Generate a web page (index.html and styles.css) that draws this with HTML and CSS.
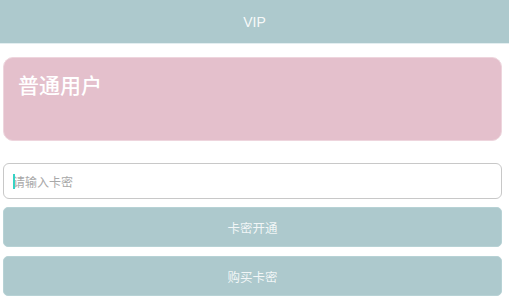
FILE: index.html
```html
<!DOCTYPE html>
<html lang="zh-CN">
<head>
<meta charset="utf-8">
<title>VIP</title>
<link rel="stylesheet" href="styles.css">
</head>
<body>
<header class="topbar">VIP</header>
<main class="content">
  <section class="user-card">
    <h1 class="user-level">普通用户</h1>
  </section>
  <div class="field">
    <span class="caret"></span>
    <input class="code-input" type="text" placeholder="请输入卡密">
  </div>
  <button class="action-btn" type="button">卡密开通</button>
  <button class="action-btn" type="button">购买卡密</button>
</main>
</body>
</html>
```
FILE: styles.css
```css
* { box-sizing: border-box; }

html, body {
  margin: 0;
  padding: 0;
  background: #ffffff;
  font-family: "Liberation Sans", "Noto Sans", "Noto Sans CJK SC", sans-serif;
}

.topbar {
  height: 44px;
  background: #adc9cd;
  border-bottom: 1px solid #e3eef0;
  color: rgba(255, 255, 255, 0.9);
  font-size: 14px;
  display: flex;
  align-items: center;
  justify-content: center;
}

.content {
  margin: 0 7px 0 3px;
  padding-top: 13px;
  display: flex;
  flex-direction: column;
}

.user-card {
  height: 84px;
  background: #e4c0cc;
  border: 1px solid #eed5dd;
  border-radius: 10px;
  padding: 12px 14px;
}

.user-level {
  margin: 0;
  font-family: "Noto Sans CJK SC", sans-serif;
  font-size: 21px;
  font-weight: 500;
  line-height: 28px;
  color: #ffffff;
}

.field {
  position: relative;
  margin-top: 22px;
  height: 36px;
  border: 1px solid #c8c8c8;
  border-radius: 6px;
  background: #ffffff;
}

.code-input {
  width: 100%;
  height: 100%;
  border: 0;
  outline: none;
  background: transparent;
  padding: 0 9px;
  font-family: "Noto Sans CJK SC", sans-serif;
  font-size: 12px;
  color: #333;
}

.code-input::placeholder {
  color: #a8a8a8;
}

.caret {
  position: absolute;
  left: 9px;
  top: 10px;
  width: 2px;
  height: 15px;
  background: #36d3c4;
}

.action-btn {
  margin-top: 8px;
  height: 40px;
  border: 1px solid #b7d2d5;
  border-radius: 5px;
  background: #adc9cd;
  color: rgba(255, 255, 255, 0.85);
  font-family: "Noto Sans CJK SC", sans-serif;
  font-size: 12.5px;
  cursor: pointer;
}

.action-btn + .action-btn {
  margin-top: 9px;
}
```
